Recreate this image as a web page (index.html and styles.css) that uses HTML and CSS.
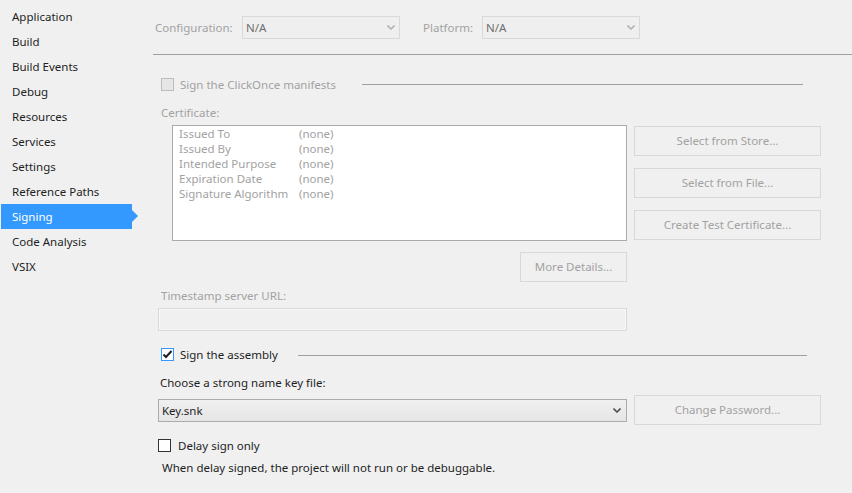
FILE: index.html
```html
<!DOCTYPE html>
<html>
<head>
<meta charset="utf-8">
<link rel="stylesheet" href="styles.css">
</head>
<body>
<div class="app">
  <nav class="side">
    <div class="item">Application</div>
    <div class="item">Build</div>
    <div class="item">Build Events</div>
    <div class="item">Debug</div>
    <div class="item">Resources</div>
    <div class="item">Services</div>
    <div class="item">Settings</div>
    <div class="item">Reference Paths</div>
    <div class="item active">Signing</div>
    <div class="item">Code Analysis</div>
    <div class="item">VSIX</div>
  </nav>
  <main class="main">
    <div class="toprow">
      <span class="lbl dis lbl-config">Configuration:</span>
      <div class="select select-dis select-top"><span class="val">N/A</span><svg class="chev" width="8" height="5" viewBox="0 0 8 5"><polyline points="0.5,0.5 4,4 7.5,0.5" fill="none" stroke="#b4b4b4" stroke-width="1.6"/></svg></div>
      <span class="lbl dis lbl-plat">Platform:</span>
      <div class="select select-dis select-top"><span class="val">N/A</span><svg class="chev" width="8" height="5" viewBox="0 0 8 5"><polyline points="0.5,0.5 4,4 7.5,0.5" fill="none" stroke="#b4b4b4" stroke-width="1.6"/></svg></div>
    </div>
    <div class="rule"></div>

    <div class="check-row row-clickonce">
      <span class="cb cb-dis"></span>
      <span class="dis cb-text">Sign the ClickOnce manifests</span>
      <span class="sep sep-clickonce"></span>
    </div>

    <div class="label dis label-cert">Certificate:</div>

    <div class="cert-grid">
      <div class="cert-left">
        <div class="cert-box">
          <div class="cert-row"><span class="k">Issued To</span><span>(none)</span></div>
          <div class="cert-row"><span class="k">Issued By</span><span>(none)</span></div>
          <div class="cert-row"><span class="k">Intended Purpose</span><span>(none)</span></div>
          <div class="cert-row"><span class="k">Expiration Date</span><span>(none)</span></div>
          <div class="cert-row"><span class="k">Signature Algorithm</span><span>(none)</span></div>
        </div>
        <div class="btn btn-more">More Details...</div>
      </div>
      <div class="cert-btns">
        <div class="btn btn-wide">Select from Store...</div>
        <div class="btn btn-wide">Select from File...</div>
        <div class="btn btn-wide">Create Test Certificate...</div>
      </div>
    </div>

    <div class="label dis label-ts">Timestamp server URL:</div>
    <div class="input-dis"></div>

    <div class="check-row row-assembly">
      <span class="cb cb-focus"><svg width="11" height="11" viewBox="0 0 11 11"><path d="M1.5 5.5 L4 8 L9.5 2" fill="none" stroke="#1e1e1e" stroke-width="2"/></svg></span>
      <span class="cb-text">Sign the assembly</span>
      <span class="sep sep-assembly"></span>
    </div>

    <div class="label label-choose">Choose a strong name key file:</div>

    <div class="key-row">
      <div class="select select-key"><span class="val">Key.snk</span><svg class="chev" width="8" height="5" viewBox="0 0 8 5"><polyline points="0.5,0.5 4,4 7.5,0.5" fill="none" stroke="#505050" stroke-width="1.6"/></svg></div>
      <div class="btn btn-wide">Change Password...</div>
    </div>

    <div class="check-row row-delay">
      <span class="cb cb-plain"></span>
      <span class="cb-text delay-text">Delay sign only</span>
    </div>

    <div class="label label-note">When delay signed, the project will not run or be debuggable.</div>
  </main>
</div>
</body>
</html>
```
FILE: styles.css
```css
* { box-sizing: border-box; }
html, body {
  margin: 0;
  padding: 0;
  background: #f0f0f0;
  font-family: "Noto Sans", "Open Sans", sans-serif;
  font-size: 11.5px;
  color: #1e1e1e;
}
.app {
  display: flex;
  width: 852px;
  height: 493px;
  overflow: hidden;
}
.side {
  width: 153px;
  flex: none;
  padding-top: 4px;
}
.item {
  height: 25px;
  line-height: 25px;
  padding-left: 11px;
  margin-left: 1px;
  width: 131px;
  position: relative;
  color: #1e1e1e;
}
.item.active {
  background: #3399ff;
  color: #ffffff;
}
.item.active::after {
  content: "";
  position: absolute;
  left: 131px;
  top: 6px;
  border-left: 6px solid #3399ff;
  border-top: 6px solid transparent;
  border-bottom: 6px solid transparent;
}
.main {
  flex: 1;
  display: flex;
  flex-direction: column;
  align-items: flex-start;
}
.dis { color: #a2a2a2; }

/* top row */
.toprow {
  margin-top: 16px;
  height: 23px;
  display: flex;
  align-items: center;
  padding-left: 2px;
}
.lbl-config { width: 87px; }
.lbl-plat { width: 59px; margin-left: 23px; }
.select {
  display: flex;
  align-items: center;
  justify-content: space-between;
  height: 23px;
  border: 1px solid #d9d9d9;
  padding: 0 4px 0 3px;
}
.select-top {
  width: 158px;
  background: #efefef;
}
.select-top .val { color: #6e6e6e; }
.chev { flex: none; }
.rule {
  margin-top: 15px;
  width: 699px;
  height: 1px;
  background: #a0a0a0;
}

/* checkbox rows */
.check-row {
  display: flex;
  align-items: center;
  height: 13px;
}
.cb {
  width: 13px;
  height: 13px;
  flex: none;
  display: flex;
  align-items: center;
  justify-content: center;
}
.cb-dis { border: 1px solid #bcbcbc; background: #e6e6e6; }
.cb-focus { border: 1px solid #3399ff; background: #ffffff; }
.cb-plain { border: 1px solid #333333; background: #ffffff; }
.cb-text { margin-left: 6px; white-space: nowrap; }
.sep {
  margin-left: auto;
  height: 1px;
  background: #a0a0a0;
}
.row-clickonce {
  margin-top: 23px;
  margin-left: 8px;
  width: 642px;
}
.sep-clickonce { width: 441px; }

.label {
  height: 16px;
  line-height: 16px;
  white-space: nowrap;
}
.label-cert { margin-top: 14px; margin-left: 8px; }

/* certificate */
.cert-grid {
  margin-top: 4px;
  margin-left: 19px;
  display: flex;
  gap: 7px;
  align-items: flex-start;
}
.cert-left {
  width: 455px;
  display: flex;
  flex-direction: column;
  align-items: flex-end;
}
.cert-box {
  width: 455px;
  height: 116px;
  background: #ffffff;
  border: 1px solid #ababab;
  padding: 0 6px;
}
.cert-row {
  display: flex;
  height: 15px;
  line-height: 15px;
  color: #a2a2a2;
}
.cert-row .k { width: 120px; }
.cert-btns {
  margin-top: 1px;
  display: flex;
  flex-direction: column;
  gap: 12px;
}
.btn {
  height: 30px;
  border: 1px solid #d8d8d8;
  background: #f0f0f0;
  color: #a2a2a2;
  display: flex;
  align-items: center;
  justify-content: center;
  white-space: nowrap;
  padding-bottom: 1px;
}
.btn-wide { width: 187px; }
.btn-more { width: 107px; margin-top: 11px; }

/* timestamp */
.label-ts { margin-top: 6px; margin-left: 8px; }
.input-dis {
  margin-top: 4px;
  margin-left: 5px;
  width: 469px;
  height: 23px;
  border: 1px solid #d9d9d9;
  box-shadow: inset 0 0 0 1px #f7f7f7;
  background: #f0f0f0;
}

.row-assembly {
  margin-top: 17px;
  margin-left: 8px;
  width: 646px;
}
.sep-assembly { width: 509px; margin-top: 1px; }

.label-choose { margin-top: 14px; margin-left: 7px; }

.key-row {
  margin-top: 4px;
  margin-left: 5px;
  display: flex;
  align-items: center;
  gap: 7px;
}
.select-key {
  width: 469px;
  border-color: #acacac;
  background: linear-gradient(#f0f0f0, #e5e5e5);
  padding-right: 5px;
}
.select-key .val { color: #1e1e1e; }

.row-delay { margin-top: 14px; margin-left: 5px; }
.delay-text { margin-left: 7px; }

.label-note { margin-top: 8px; margin-left: 9px; }
```
